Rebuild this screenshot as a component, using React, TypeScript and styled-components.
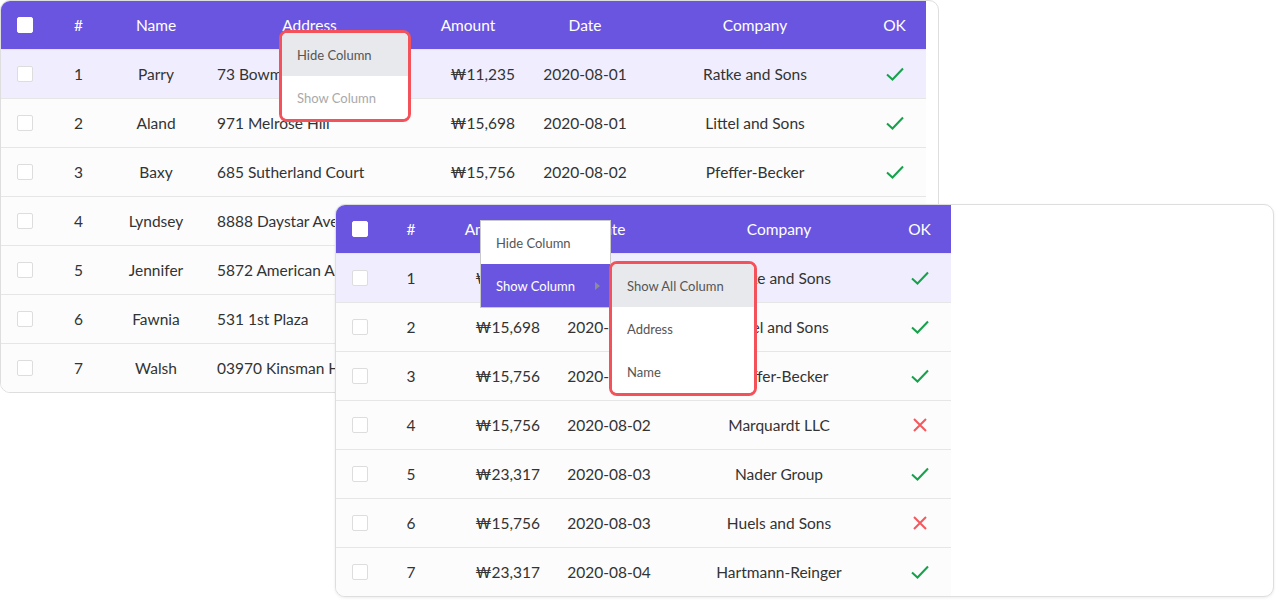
import React from 'react'
import styled, { createGlobalStyle } from 'styled-components'

const GlobalStyle = createGlobalStyle`
  body {
    margin: 0;
    background: #ffffff;
    font-family: Lato, 'Liberation Sans', sans-serif;
  }
`

type Align = 'left' | 'center' | 'right'

type Column = {
  title: string
  width: number
  align: Align
}

type Row = {
  no: number
  name?: string
  address?: string
  amount: string
  date: string
  company: string
  ok: boolean
}

const rows: Row[] = [
  { no: 1, name: 'Parry', address: '73 Bowman Way', amount: '₩11,235', date: '2020-08-01', company: 'Ratke and Sons', ok: true },
  { no: 2, name: 'Aland', address: '971 Melrose Hill', amount: '₩15,698', date: '2020-08-01', company: 'Littel and Sons', ok: true },
  { no: 3, name: 'Baxy', address: '685 Sutherland Court', amount: '₩15,756', date: '2020-08-02', company: 'Pfeffer-Becker', ok: true },
  { no: 4, name: 'Lyndsey', address: '8888 Daystar Avenue', amount: '₩15,756', date: '2020-08-02', company: 'Marquardt LLC', ok: false },
  { no: 5, name: 'Jennifer', address: '5872 American Ash Road', amount: '₩23,317', date: '2020-08-03', company: 'Nader Group', ok: true },
  { no: 6, name: 'Fawnia', address: '531 1st Plaza', amount: '₩15,756', date: '2020-08-03', company: 'Huels and Sons', ok: false },
  { no: 7, name: 'Walsh', address: '03970 Kinsman Hill', amount: '₩23,317', date: '2020-08-04', company: 'Hartmann-Reinger', ok: true },
]

// all columns visible (first grid)
const fullColumns: Column[] = [
  { title: '#', width: 55, align: 'center' },
  { title: 'Name', width: 100, align: 'center' },
  { title: 'Address', width: 207, align: 'left' },
  { title: 'Amount', width: 110, align: 'right' },
  { title: 'Date', width: 124, align: 'center' },
  { title: 'Company', width: 216, align: 'center' },
  { title: 'OK', width: 63, align: 'center' },
]

// Name + Address hidden (second grid)
const hiddenColumns: Column[] = [
  { title: '#', width: 50, align: 'center' },
  { title: 'Amount', width: 112, align: 'right' },
  { title: 'Date', width: 122, align: 'center' },
  { title: 'Company', width: 218, align: 'center' },
  { title: 'OK', width: 63, align: 'center' },
]

const Canvas = styled.div`
  position: relative;
  width: 1276px;
  height: 600px;
  overflow: hidden;
`

const Panel = styled.div<{ $floating?: boolean }>`
  position: ${(p) => (p.$floating ? 'absolute' : 'relative')};
  left: ${(p) => (p.$floating ? '335px' : '0')};
  top: ${(p) => (p.$floating ? '204px' : '0')};
  width: 939px;
  box-sizing: border-box;
  border: 1px solid #dedede;
  border-radius: 10px;
  overflow: hidden;
  background: #ffffff;
  box-shadow: ${(p) => (p.$floating ? '0 1px 3px rgba(0, 0, 0, 0.08)' : 'none')};
`

const Grid = styled.div<{ $template: string }>`
  display: grid;
  grid-template-columns: ${(p) => p.$template};
  width: max-content;
`

const HeadCell = styled.div`
  height: 48px;
  background: #6a55e0;
  color: #ffffff;
  font-size: 15.5px;
  display: flex;
  align-items: center;
  justify-content: center;
  white-space: nowrap;
`

const Cell = styled.div<{ $align: Align; $active: boolean }>`
  box-sizing: border-box;
  border-top: 1px solid #e6e6e6;
  height: 49px;
  background: ${(p) => (p.$active ? '#f0eefe' : '#fcfcfc')};
  color: #333333;
  font-size: 15.5px;
  display: flex;
  align-items: center;
  padding: ${(p) => (p.$align === 'center' ? '0' : '0 8px 0 11px')};
  white-space: nowrap;
  overflow: hidden;
  justify-content: ${(p) =>
    p.$align === 'left' ? 'flex-start' : p.$align === 'right' ? 'flex-end' : 'center'};
`

const Check = styled.span<{ $head?: boolean }>`
  display: block;
  width: 16px;
  height: 16px;
  margin-left: -2px;
  box-sizing: border-box;
  border-radius: 2px;
  background: #ffffff;
  border: 1px solid ${(p) => (p.$head ? '#ffffff' : '#dddddd')};
`

const Menu = styled.div<{ $left: number; $top: number; $width: number; $ring?: boolean }>`
  position: absolute;
  left: ${(p) => p.$left}px;
  top: ${(p) => p.$top}px;
  width: ${(p) => p.$width}px;
  box-sizing: border-box;
  background: #ffffff;
  border: ${(p) => (p.$ring ? '3px solid #f4525b' : '1px solid #c9c9c9')};
  border-radius: ${(p) => (p.$ring ? '8px' : '0')};
  overflow: hidden;
  display: flex;
  flex-direction: column;
`

const MenuItem = styled.div<{ $state?: 'hover' | 'open' | 'disabled' }>`
  position: relative;
  height: 43px;
  display: flex;
  align-items: center;
  padding-left: 15px;
  font-size: 13px;
  white-space: nowrap;
  color: ${(p) =>
    p.$state === 'open' ? '#ffffff' : p.$state === 'disabled' ? '#a9a9a9' : '#555555'};
  background: ${(p) =>
    p.$state === 'hover' ? '#e8e9ec' : p.$state === 'open' ? '#6a55e0' : '#ffffff'};
`

const Arrow = styled.span`
  position: absolute;
  right: 10px;
  top: 50%;
  margin-top: -4px;
  width: 0;
  height: 0;
  border-top: 4px solid transparent;
  border-bottom: 4px solid transparent;
  border-left: 5px solid #8c8c96;
`

const OkIcon = ({ ok }: { ok: boolean }) =>
  ok ? (
    <svg width="20" height="16" viewBox="0 0 20 16">
      <path d="M2 8.5 L7.5 13.5 L18 2.5" fill="none" stroke="#16a14b" strokeWidth="2" />
    </svg>
  ) : (
    <svg width="16" height="16" viewBox="0 0 16 16">
      <path d="M2 2 L14 14 M14 2 L2 14" fill="none" stroke="#f5585c" strokeWidth="2" />
    </svg>
  )

const cellValue = (row: Row, title: string) => {
  switch (title) {
    case '#':
      return row.no
    case 'Name':
      return row.name
    case 'Address':
      return row.address
    case 'Amount':
      return row.amount
    case 'Date':
      return row.date
    case 'Company':
      return row.company
    default:
      return <OkIcon ok={row.ok} />
  }
}

const DataGrid = ({ columns }: { columns: Column[] }) => {
  const template = ['50px', ...columns.map((c) => `${c.width}px`)].join(' ')
  return (
    <Grid $template={template}>
      <HeadCell>
        <Check $head />
      </HeadCell>
      {columns.map((c) => (
        <HeadCell key={c.title}>{c.title}</HeadCell>
      ))}
      {rows.map((row) => (
        <React.Fragment key={row.no}>
          <Cell $align="center" $active={row.no === 1}>
            <Check />
          </Cell>
          {columns.map((c) => (
            <Cell key={c.title} $align={c.align} $active={row.no === 1}>
              {cellValue(row, c.title)}
            </Cell>
          ))}
        </React.Fragment>
      ))}
    </Grid>
  )
}

const App = () => {
  return (
    <>
      <GlobalStyle />
      <Canvas>
        <Panel>
          <DataGrid columns={fullColumns} />
        </Panel>

        <Menu $left={279} $top={30} $width={132} $ring>
          <MenuItem $state="hover">Hide Column</MenuItem>
          <MenuItem $state="disabled">Show Column</MenuItem>
        </Menu>

        <Panel $floating>
          <DataGrid columns={hiddenColumns} />
        </Panel>

        <Menu $left={480} $top={220} $width={131}>
          <MenuItem>Hide Column</MenuItem>
          <MenuItem $state="open">
            Show Column
            <Arrow />
          </MenuItem>
        </Menu>

        <Menu $left={609} $top={261} $width={148} $ring>
          <MenuItem $state="hover">Show All Column</MenuItem>
          <MenuItem>Address</MenuItem>
          <MenuItem>Name</MenuItem>
        </Menu>
      </Canvas>
    </>
  )
}

export default App
